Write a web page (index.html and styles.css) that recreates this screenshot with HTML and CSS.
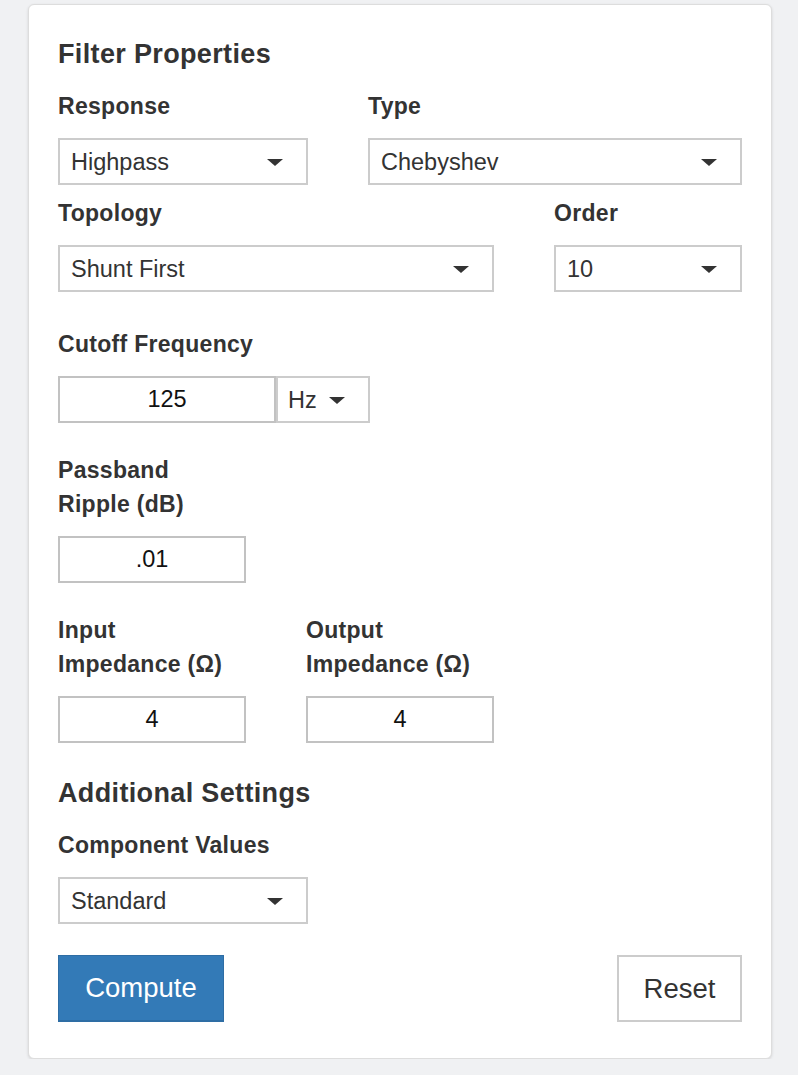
FILE: index.html
```html
<!DOCTYPE html>
<html lang="en">
<head>
<meta charset="utf-8">
<title>Filter Properties</title>
<link rel="stylesheet" href="styles.css">
</head>
<body>
<div class="card">
  <h2 class="section-title">Filter Properties</h2>

  <div class="row row-response">
    <div class="field">
      <label class="field-label">Response</label>
      <div class="select-wrap">
        <select class="select"><option>Highpass</option></select>
      </div>
    </div>
    <div class="field">
      <label class="field-label">Type</label>
      <div class="select-wrap">
        <select class="select"><option>Chebyshev</option></select>
      </div>
    </div>
  </div>

  <div class="row row-topology">
    <div class="field">
      <label class="field-label">Topology</label>
      <div class="select-wrap">
        <select class="select"><option>Shunt First</option></select>
      </div>
    </div>
    <div class="field">
      <label class="field-label">Order</label>
      <div class="select-wrap">
        <select class="select"><option>10</option></select>
      </div>
    </div>
  </div>

  <div class="field group-cutoff">
    <label class="field-label">Cutoff Frequency</label>
    <div class="input-group">
      <input class="text-input cutoff-input" type="text" value="125">
      <div class="select-wrap unit-wrap">
        <select class="select unit-select"><option>Hz</option></select>
      </div>
    </div>
  </div>

  <div class="field narrow group-ripple">
    <label class="field-label wrap-label">Passband Ripple (dB)</label>
    <input class="text-input" type="text" value=".01">
  </div>

  <div class="row row-impedance">
    <div class="field">
      <label class="field-label wrap-label">Input Impedance (Ω)</label>
      <input class="text-input" type="text" value="4">
    </div>
    <div class="field">
      <label class="field-label wrap-label">Output Impedance (Ω)</label>
      <input class="text-input" type="text" value="4">
    </div>
  </div>

  <h2 class="section-title">Additional Settings</h2>

  <div class="field group-component">
    <label class="field-label">Component Values</label>
    <div class="select-wrap">
      <select class="select"><option>Standard</option></select>
    </div>
  </div>

  <div class="actions">
    <button class="btn btn-primary" type="button">Compute</button>
    <button class="btn btn-default" type="button">Reset</button>
  </div>
</div>
</body>
</html>
```

FILE: styles.css
```css
html, body {
  margin: 0;
  padding: 0;
}

body {
  background: #f0f1f3;
  font-family: "Liberation Sans", Arial, Helvetica, sans-serif;
  color: #333;
  padding: 4px 0 0 28px;
}

.card {
  box-sizing: border-box;
  width: 744px;
  background: #fff;
  border: 1px solid #dddddd;
  border-radius: 6px;
  box-shadow: 0 1px 3px rgba(0, 0, 0, 0.12);
  padding: 33px 29px 36px 29px;
}

.section-title {
  margin: 0 0 19px 0;
  font-size: 27px;
  line-height: 32px;
  font-weight: bold;
  letter-spacing: 0.35px;
  color: #333;
}

.row {
  display: grid;
  column-gap: 60px;
}

.row-response {
  grid-template-columns: 250px 1fr;
  margin-bottom: 11px;
}

.row-topology {
  grid-template-columns: 1fr 188px;
  margin-bottom: 35px;
}

.row-impedance {
  grid-template-columns: 188px 188px;
  margin-bottom: 34px;
}

.field-label {
  display: block;
  font-size: 23px;
  line-height: 34px;
  font-weight: bold;
  letter-spacing: 0.3px;
  color: #333;
  margin-bottom: 15px;
}

.wrap-label {
  max-width: 180px;
}

.group-cutoff {
  margin-bottom: 30px;
}

.narrow {
  width: 188px;
}

.group-ripple {
  margin-bottom: 30px;
}

.group-component {
  width: 250px;
  margin-bottom: 31px;
}

.select-wrap {
  position: relative;
}

.select-wrap::after {
  content: "";
  position: absolute;
  right: 25px;
  top: 50%;
  margin-top: -3px;
  width: 0;
  height: 0;
  border-left: 8px solid transparent;
  border-right: 8px solid transparent;
  border-top: 7px solid #333;
  pointer-events: none;
}

.select {
  display: block;
  box-sizing: border-box;
  width: 100%;
  height: 47px;
  margin: 0;
  padding: 0 40px 0 11px;
  border: 2px solid #cccccc;
  border-radius: 0;
  background: #fff;
  font-family: inherit;
  font-size: 23.5px;
  color: #333;
  -webkit-appearance: none;
  appearance: none;
  outline: none;
}

.text-input {
  display: block;
  box-sizing: border-box;
  width: 100%;
  height: 47px;
  margin: 0;
  padding: 0 8px;
  border: 2px solid #c2c2c2;
  border-radius: 0;
  background: #fff;
  font-family: inherit;
  font-size: 23.5px;
  color: #111;
  text-align: center;
  outline: none;
}

.input-group {
  display: flex;
}

.cutoff-input {
  width: 218px;
}

.unit-wrap {
  width: 94px;
}

.unit-select {
  padding-left: 10px;
}

.actions {
  display: flex;
  justify-content: space-between;
  align-items: flex-start;
}

.btn {
  box-sizing: border-box;
  height: 67px;
  margin: 0;
  border-radius: 0;
  font-family: inherit;
  font-size: 27.5px;
  cursor: pointer;
}

.btn-primary {
  width: 166px;
  background: #337ab7;
  border: 1px solid #2e6da4;
  border-bottom-width: 2px;
  color: #fff;
}

.btn-default {
  width: 125px;
  background: #fff;
  border: 2px solid #cccccc;
  color: #333;
}
```
